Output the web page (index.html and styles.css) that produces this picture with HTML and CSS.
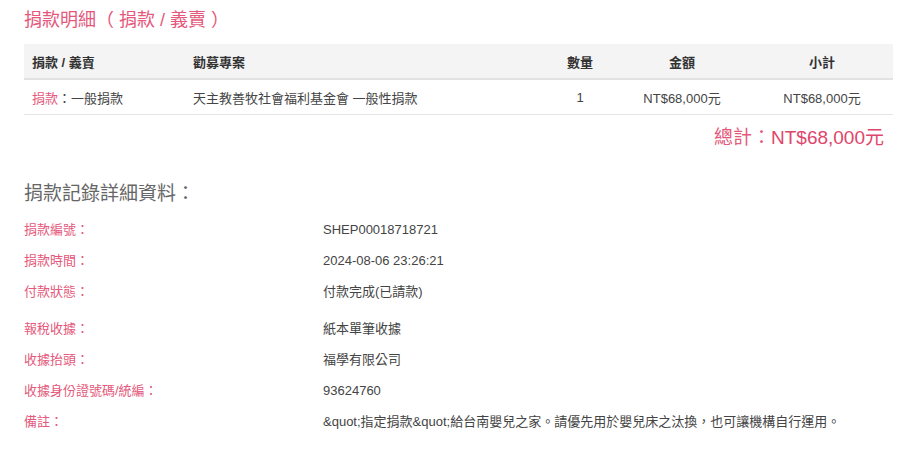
FILE: index.html
```html
<!DOCTYPE html>
<html lang="zh-Hant">
<head>
<meta charset="utf-8">
<title>捐款明細</title>
<link rel="stylesheet" href="styles.css">
</head>
<body>
<div class="page">
  <h1 class="title">捐款明細（ 捐款 / 義賣 ）</h1>
  <table class="items">
    <colgroup>
      <col class="c1"><col class="c2"><col class="c3"><col class="c4"><col class="c5">
    </colgroup>
    <thead>
      <tr>
        <th class="left">捐款 / 義賣</th>
        <th class="left">勸募專案</th>
        <th>數量</th>
        <th>金額</th>
        <th>小計</th>
      </tr>
    </thead>
    <tbody>
      <tr>
        <td class="left"><span class="pink">捐款</span>：一般捐款</td>
        <td class="left">天主教善牧社會福利基金會 一般性捐款</td>
        <td>1</td>
        <td>NT$68,000元</td>
        <td>NT$68,000元</td>
      </tr>
    </tbody>
  </table>
  <div class="total">總計：<span class="amount">NT$68,000元</span></div>

  <h2 class="section">捐款記錄詳細資料：</h2>
  <div class="group">
    <div class="row"><span class="label">捐款編號：</span><span class="value">SHEP00018718721</span></div>
    <div class="row"><span class="label">捐款時間：</span><span class="value">2024-08-06 23:26:21</span></div>
    <div class="row"><span class="label">付款狀態：</span><span class="value">付款完成(已請款)</span></div>
  </div>
  <div class="group">
    <div class="row"><span class="label">報稅收據：</span><span class="value">紙本單筆收據</span></div>
    <div class="row"><span class="label">收據抬頭：</span><span class="value">福學有限公司</span></div>
    <div class="row"><span class="label">收據身份證號碼/統編：</span><span class="value">93624760</span></div>
    <div class="row"><span class="label">備註：</span><span class="value">&amp;quot;指定捐款&amp;quot;給台南嬰兒之家。請優先用於嬰兒床之汰換，也可讓機構自行運用。</span></div>
  </div>
</div>
</body>
</html>
```

FILE: styles.css
```css
html, body {
  margin: 0;
  padding: 0;
  background: #ffffff;
}

body {
  font-family: "Liberation Sans", "Noto Sans CJK TC", Arial, sans-serif;
  color: #444444;
  font-size: 13px;
}

.page {
  padding: 0 16px 0 24px;
}

.title {
  margin: 8px 0 12px 0;
  font-size: 18px;
  line-height: 24px;
  font-weight: normal;
  color: #e4587b;
}

.items {
  width: 100%;
  border-collapse: collapse;
  table-layout: fixed;
}

.c1 { width: 161px; }
.c2 { width: 362px; }
.c3 { width: 66px; }
.c4 { width: 138px; }
.c5 { width: 142px; }

.items th {
  background: #f4f4f4;
  height: 34px;
  padding: 0 8px;
  font-weight: bold;
  color: #333333;
  text-align: center;
  border-bottom: 2px solid #e2e2e2;
}

.items td {
  height: 34px;
  padding: 0 8px;
  text-align: center;
  color: #444444;
  border-bottom: 1px solid #e4e4e4;
}

.items .left {
  text-align: left;
}

.pink {
  color: #e4587b;
}

.total {
  margin-top: 11px;
  padding-right: 9px;
  text-align: right;
  font-size: 19px;
  line-height: 24px;
  color: #e4587b;
}

.total .amount {
  color: #e0456b;
}

.section {
  margin: 32px 0 8px 0;
  font-size: 19px;
  line-height: 24px;
  font-weight: normal;
  color: #666666;
}

.group + .group {
  margin-top: 6px;
}

.row {
  display: flex;
  line-height: 31px;
  height: 31px;
}

.label {
  width: 299px;
  flex: none;
  color: #e4587b;
}

.value {
  color: #444444;
}
```
